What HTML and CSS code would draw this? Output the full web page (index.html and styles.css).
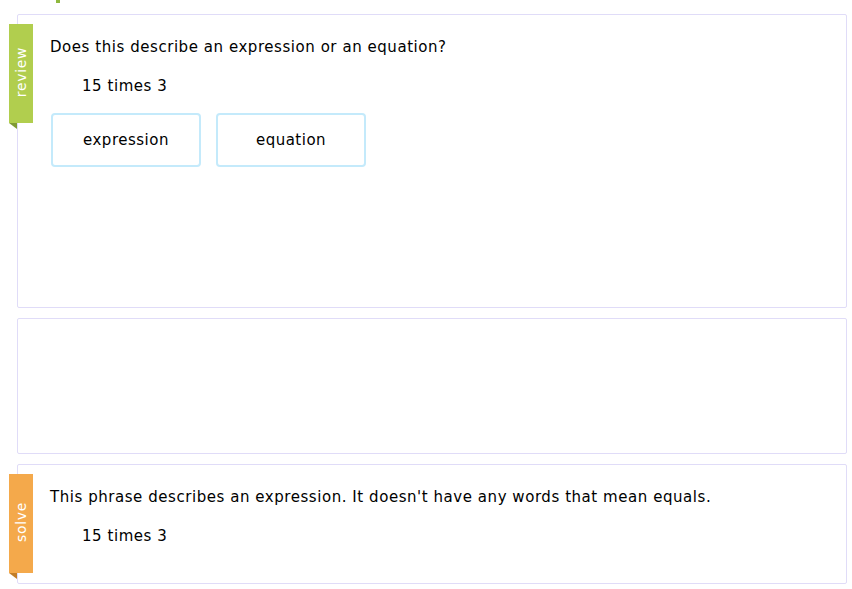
FILE: index.html
```html
<!DOCTYPE html>
<html>
<head>
<meta charset="utf-8">
<link rel="stylesheet" href="styles.css">
</head>
<body>
<div class="page">
  <div class="topmark"></div>
  <section class="card card-review">
    <div class="ribbon ribbon-green"><span>review</span></div>
    <p class="prompt">Does this describe an expression or an equation?</p>
    <p class="phrase">15 times 3</p>
    <div class="choices">
      <button class="choice">expression</button>
      <button class="choice">equation</button>
    </div>
  </section>
  <section class="card card-empty"></section>
  <section class="card card-solve">
    <div class="ribbon ribbon-orange"><span>solve</span></div>
    <p class="prompt">This phrase describes an expression. It doesn't have any words that mean equals.</p>
    <p class="phrase">15 times 3</p>
  </section>
</div>
</body>
</html>
```

FILE: styles.css
```css
* { box-sizing: border-box; }
html, body { margin: 0; padding: 0; background: #fff; }
body {
  font-family: "DejaVu Sans", Verdana, sans-serif;
  font-size: 15px;
  letter-spacing: 0.55px;
  line-height: 18px;
  color: #000;
}
.page {
  width: 852px;
  display: flex;
  flex-direction: column;
}
.topmark {
  width: 4px;
  height: 3px;
  margin-left: 56px;
  margin-bottom: 11px;
  background: #8fb83e;
}
.card {
  position: relative;
  margin-left: 17px;
  width: 830px;
  border: 1px solid #e0dcf8;
  border-radius: 2px;
  background: #fff;
  padding: 23px 0 0 32px;
}
.card-review { height: 294px; }
.card-empty { height: 136px; margin-top: 10px; }
.card-solve { height: 120px; margin-top: 10px; }
.ribbon {
  position: absolute;
  left: -9px;
  top: 9px;
  width: 24px;
  height: 99px;
  display: flex;
  align-items: center;
  justify-content: center;
}
.ribbon span {
  transform: rotate(-90deg);
  color: #fff;
  font-size: 14px;
  letter-spacing: 0.7px;
  white-space: nowrap;
  margin-top: -3px;
}
.ribbon::after {
  content: "";
  position: absolute;
  left: 0;
  top: 99px;
  width: 8px;
  height: 6px;
  clip-path: polygon(0 0, 100% 0, 100% 100%);
}
.ribbon-green { background: #b1ce4e; }
.ribbon-green::after { background: #7f9a34; }
.ribbon-orange { background: #f4a94b; }
.ribbon-orange::after { background: #c27d28; }
.prompt { margin: 0; }
.phrase { margin: 21px 0 0 32px; }
.choices {
  display: flex;
  gap: 15px;
  margin: 18px 0 0 1px;
}
.choice {
  width: 150px;
  height: 54px;
  border: 2px solid #c4eafb;
  border-radius: 4px;
  background: #fff;
  font-family: inherit;
  font-size: 15px;
  letter-spacing: 0.5px;
  color: #000;
  padding: 0;
}
```
